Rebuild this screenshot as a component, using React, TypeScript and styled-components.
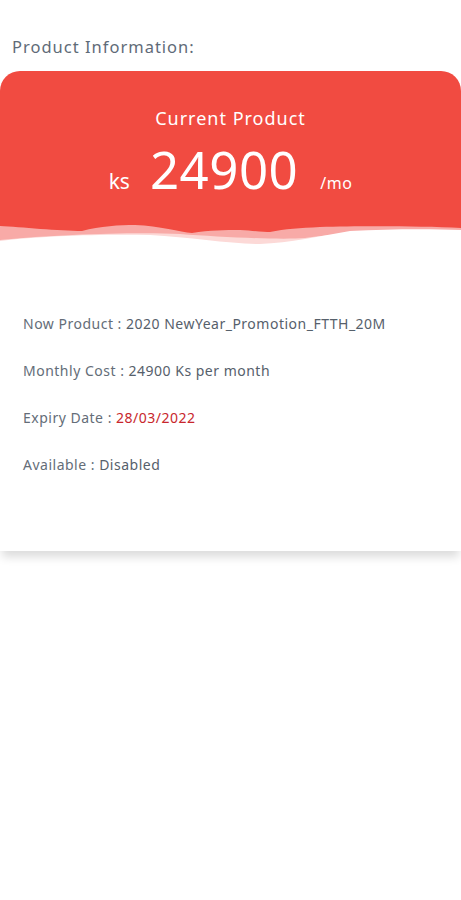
import React from "react";
import styled, { createGlobalStyle } from "styled-components";

const Global = createGlobalStyle`
  html, body { margin: 0; padding: 0; background: #ffffff; }
  body { font-family: "Noto Sans", "Open Sans", sans-serif; }
`;

const Page = styled.div`
  width: 461px;
  min-height: 900px;
  background: #ffffff;
  display: flex;
  flex-direction: column;
  overflow: hidden;
`;

const SectionTitle = styled.div`
  padding: 36px 0 13px 12px;
  font-size: 16.5px;
  line-height: 22px;
  color: #5f6b78;
  letter-spacing: 1px;
`;

const Card = styled.div`
  width: 461px;
  border-radius: 20px 20px 0 0;
  background: #ffffff;
  box-shadow: 0 8px 10px -2px rgba(0, 0, 0, 0.14);
  overflow: hidden;
  display: flex;
  flex-direction: column;
`;

const Header = styled.div`
  position: relative;
  height: 175px;
  background: #f14b41;
  display: flex;
  flex-direction: column;
  align-items: center;
  color: #ffffff;
`;

const HeaderTitle = styled.div`
  margin-top: 35px;
  font-size: 18px;
  line-height: 24px;
  letter-spacing: 1px;
`;

const PriceRow = styled.div`
  margin-top: 8px;
  display: flex;
  align-items: baseline;
`;

const Currency = styled.span`
  font-size: 21px;
  margin-right: 20px;
`;

const Amount = styled.span`
  font-size: 51px;
  line-height: 62px;
  letter-spacing: 0.5px;
`;

const Unit = styled.span`
  font-size: 16px;
  margin-left: 22px;
  letter-spacing: 0.5px;
`;

const WaveSvg = styled.svg`
  position: absolute;
  left: 0;
  bottom: 0;
  display: block;
`;

const Body = styled.div`
  display: flex;
  flex-direction: column;
  padding: 68px 0 76px 23px;
  gap: 27px;
`;

const Row = styled.div`
  font-size: 14px;
  line-height: 20px;
  color: #646d78;
  letter-spacing: 0.5px;
`;

const Value = styled.span<{ $alert?: boolean }>`
  color: ${(p) => (p.$alert ? "#c8262c" : "#56606b")};
`;

const Wave = () => (
  <WaveSvg width="461" height="30" viewBox="0 0 461 30">
    <path
      d="M0 10 C20 11, 60 15, 82 15 C100 10, 120 9, 135 9 C160 10, 180 16, 192 17 C210 14, 225 14, 240 14 C255 15, 265 16, 270 16 C285 13, 300 12, 320 11 C360 10, 420 10, 461 12 L461 30 L0 30 Z"
      fill="#f8aaa7"
    />
    <path
      d="M0 24 C60 18, 140 16, 180 18 C220 21, 280 24, 305 22 C330 18, 400 14, 461 14 L461 30 L0 30 Z"
      fill="#fcd9d7"
    />
    <path
      d="M0 25 C40 20, 100 18, 150 19 C190 21, 230 28, 260 28 C290 27, 320 20, 350 15 C390 13, 430 13, 461 14 L461 30 L0 30 Z"
      fill="#ffffff"
    />
  </WaveSvg>
);

export default function App() {
  return (
    <Page>
      <Global />
      <SectionTitle>Product Information:</SectionTitle>
      <Card>
        <Header>
          <HeaderTitle>Current Product</HeaderTitle>
          <PriceRow>
            <Currency>ks</Currency>
            <Amount>24900</Amount>
            <Unit>/mo</Unit>
          </PriceRow>
          <Wave />
        </Header>
        <Body>
          <Row>
            Now Product : <Value>2020 NewYear_Promotion_FTTH_20M</Value>
          </Row>
          <Row>
            Monthly Cost : <Value>24900 Ks per month</Value>
          </Row>
          <Row>
            Expiry Date : <Value $alert>28/03/2022</Value>
          </Row>
          <Row>
            Available : <Value>Disabled</Value>
          </Row>
        </Body>
      </Card>
    </Page>
  );
}
